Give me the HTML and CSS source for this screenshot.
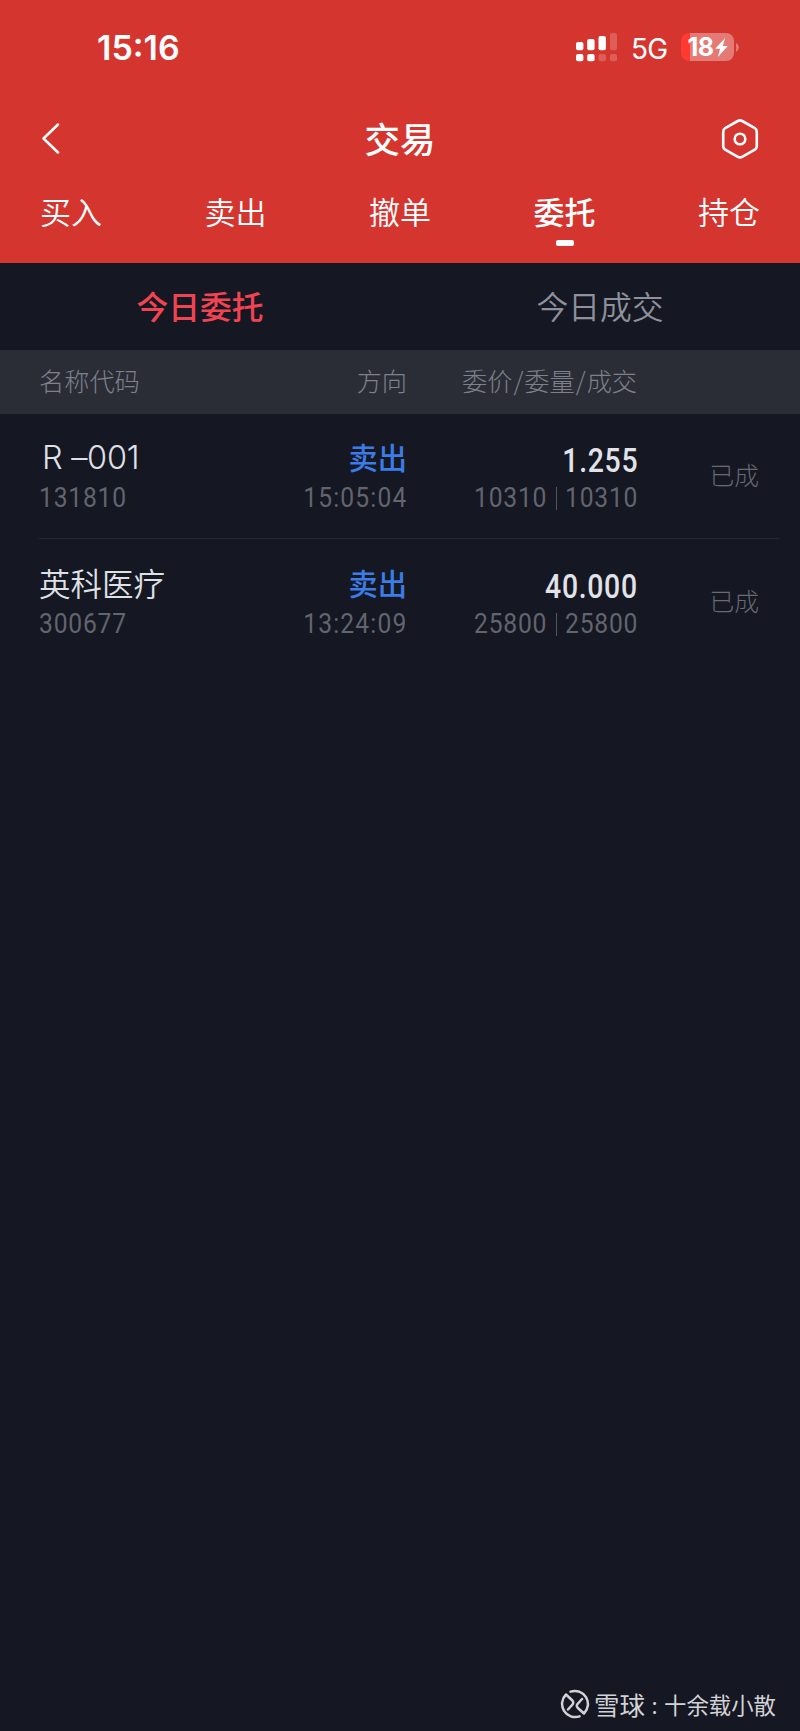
FILE: index.html
```html
<!DOCTYPE html>
<html lang="zh-CN">
<head>
<meta charset="utf-8">
<title>交易</title>
<link rel="stylesheet" href="styles.css">
</head>
<body>
<header class="top">
  <div class="status">
    <span class="clock">15:16</span>
    <div class="status-right">
      <svg class="signal" width="42" height="29" viewBox="0 0 42 29" fill="#fff">
        <rect x="0" y="9" width="7.4" height="8.3" rx="2"/>
        <rect x="11.2" y="6" width="7.4" height="11.3" rx="2"/>
        <rect x="22.5" y="3" width="7.4" height="14.3" rx="2"/>
        <rect x="34" y="0" width="7" height="17.3" rx="2" opacity=".2"/>
        <rect x="0" y="21" width="7.4" height="7.3" rx="2"/>
        <rect x="11.2" y="21" width="7.4" height="7.3" rx="2"/>
        <rect x="22.5" y="21" width="7.4" height="7.3" rx="2" opacity=".2"/>
        <rect x="34" y="21" width="7" height="7.3" rx="2" opacity=".2"/>
      </svg>
      <span class="network">5G</span>
      <div class="battery">
        <span class="battery-text">18</span>
        <svg width="13" height="19" viewBox="0 0 12 18" fill="#fff"><path d="M9.4 0 0 10.200h4.600L2.600 18 12 7.600H7.200z"/></svg>
      </div>
      <svg class="battery-cap" width="4" height="10" viewBox="0 0 4 10"><path d="M0 0a5 5 0 0 1 0 9z" fill="#e47975"/></svg>
    </div>
  </div>
  <div class="nav">
    <svg width="20" height="32" viewBox="0 0 20 32" fill="none" stroke="#fff" stroke-width="2.5" stroke-linecap="round" stroke-linejoin="round"><path d="M17 1.500 2.500 15.500 17 29.500"/></svg>
    <h1 class="title">交易</h1>
    <svg width="38" height="40" viewBox="0 0 38 40" fill="none" stroke="#fff" stroke-width="2.6" stroke-linejoin="round"><path d="M16.8 2a4.4 4.4 0 0 1 4.4 0L33.8 9.2a4.4 4.4 0 0 1 2 3.7V27a4.4 4.4 0 0 1-2 3.7L21.2 37.8a4.4 4.4 0 0 1-4.4 0L4.2 30.7a4.4 4.4 0 0 1-2-3.7V12.900a4.400 4.400 0 0 1 2-3.700z"/><circle cx="19" cy="20" r="5.300"/></svg>
  </div>
  <nav class="tabs">
    <span class="tab">买入</span>
    <span class="tab">卖出</span>
    <span class="tab">撤单</span>
    <span class="tab tab-active">委托</span>
    <span class="tab">持仓</span>
  </nav>
</header>
<div class="subtabs">
  <span class="subtab subtab-active">今日委托</span>
  <span class="subtab">今日成交</span>
</div>
<div class="table-head grid">
  <span>名称代码</span>
  <span class="right">方向</span>
  <span class="right">委价<i class="slash">/</i>委量<i class="slash">/</i>成交</span>
</div>
<main class="orders">
  <div class="order grid">
    <div class="cell">
      <span class="name name-latin">R –001</span>
      <span class="num code">131810</span>
    </div>
    <div class="cell right">
      <span class="side">卖出</span>
      <span class="num num-right time">15:05:04</span>
    </div>
    <div class="cell right">
      <span class="price num-right">1.255</span>
      <div class="volumes"><span class="num vol">10310</span><i class="bar"></i><span class="num vol">10310</span></div>
    </div>
    <span class="state">已成</span>
  </div>
  <div class="order grid">
    <div class="cell">
      <span class="name">英科医疗</span>
      <span class="num code">300677</span>
    </div>
    <div class="cell right">
      <span class="side">卖出</span>
      <span class="num num-right time">13:24:09</span>
    </div>
    <div class="cell right">
      <span class="price num-right">40.000</span>
      <div class="volumes"><span class="num vol">25800</span><i class="bar"></i><span class="num vol">25800</span></div>
    </div>
    <span class="state">已成</span>
  </div>
</main>
<footer class="watermark">
  <svg width="30" height="30" viewBox="0 0 30 30" fill="none" stroke="#d2d2d6" stroke-width="2.500" stroke-linecap="round" stroke-linejoin="round"><path d="M10.500 2.600A13.200 13.200 0 0 1 24 24.500L17.800 19Q16 17 17.500 15L22 10M19.500 27.400A13.200 13.200 0 0 1 6 5.500L12.400 11.500Q14 13.500 12.500 15.500L8 20.500"/></svg>
  <span class="brand">雪球</span>
  <span class="colon">:</span>
  <span class="author">十余载小散</span>
</footer>
</body>
</html>
```
FILE: styles.css
```css
* { box-sizing: border-box; }
body {
  margin: 0;
  height: 1731px;
  display: flex;
  flex-direction: column;
  background: #151722;
  color: #dfe0e6;
  font-family: "Noto Sans CJK SC", sans-serif;
}
.top {
  height: 263px;
  background: #d5352f;
  color: #fff;
}
.status {
  display: flex;
  justify-content: space-between;
  height: 94px;
  padding: 0 60px 0 97px;
}
.clock {
  font: 600 34px/40px Inter, sans-serif;
  padding-top: 28px;
}
.status-right {
  display: flex;
  align-items: flex-start;
  padding-top: 33px;
}
.network {
  width: 37px;
  margin: 1px 0 0 13px;
  font: 400 28px/30px Inter, sans-serif;
  letter-spacing: -.8px;
}
.battery {
  display: flex;
  align-items: center;
  justify-content: center;
  gap: 1px;
  width: 53px;
  height: 28px;
  margin-left: 13px;
  border-radius: 8px;
  background: linear-gradient(90deg, #ff3a30 9px, #e47975 9px);
}
.battery-text {
  font: 700 25px/28px Inter, sans-serif;
  letter-spacing: -.5px;
}
.battery-cap { margin: 10px 0 0 2px; }
.nav {
  display: flex;
  align-items: center;
  justify-content: space-between;
  height: 90px;
  padding: 0 41px 0 41px;
}
.title {
  margin: -3px 0 0 18px;
  font-size: 35.500px;
  font-weight: 500;
  line-height: 40px;
}
.tabs {
  display: flex;
  justify-content: space-between;
  padding: 7px 40px 0;
}
.tab {
  display: flex;
  flex-direction: column;
  align-items: center;
  font-size: 31px;
  font-weight: 350;
  line-height: 40px;
}
.tab-active { font-weight: 500; }
.tab-active::after {
  content: "";
  width: 18px;
  height: 6px;
  margin-top: 9px;
  border-radius: 2px;
  background: #fff;
}
.subtabs {
  display: grid;
  grid-template-columns: 1fr 1fr;
  height: 87px;
  text-align: center;
  font-size: 31.800px;
  font-weight: 350;
  line-height: 85px;
  color: #8e909c;
}
.subtab-active {
  font-weight: 500;
  color: #f14453;
}
.grid {
  display: grid;
  grid-template-columns: 200px 168px 230px 122px;
  padding-left: 39px;
}
.table-head {
  height: 64px;
  background: #2b2d36;
  color: #7e808b;
  font-size: 25.200px;
  font-weight: 300;
  line-height: 61px;
}
.slash {
  padding: 0 1px;
  font-style: normal;
}
.right { text-align: right; }
.order {
  position: relative;
  height: 126px;
}
.order:first-child::after {
  content: "";
  position: absolute;
  left: 39px;
  right: 21px;
  bottom: 1px;
  height: 1px;
  background: #262832;
}
.cell {
  display: flex;
  flex-direction: column;
  align-items: flex-start;
  padding-top: 22px;
}
.cell.right { align-items: flex-end; }
.name {
  font-size: 31.500px;
  font-weight: 350;
  line-height: 40px;
}
.name-latin {
  padding: 2px 0 0 3px;
  height: 40px;
  font-family: Inter, sans-serif;
  font-size: 32.500px;
  font-weight: 300;
  letter-spacing: -.3px;
}
.side {
  font-size: 29.300px;
  font-weight: 500;
  line-height: 40px;
  height: 40px;
  color: #3b7ce6;
}
.num, .price {
  font-family: Roboto, sans-serif;
  transform: scaleX(.88);
  transform-origin: left;
}
.num-right { transform-origin: right; }
.num {
  height: 42px;
  font-size: 28px;
  line-height: 44px;
  letter-spacing: .9px;
  color: #62646e;
}
.time { letter-spacing: 1.300px; }
.price {
  font-size: 33px;
  font-weight: 500;
  line-height: 49px;
  height: 40px;
  letter-spacing: .8px;
  margin-right: -1px;
  color: #e2e3e8;
  transform: scaleX(.86);
}
.volumes {
  display: flex;
  align-items: center;
}
.vol {
  width: 72px;
  letter-spacing: .9px;
}
.bar {
  width: 1px;
  height: 23px;
  margin: 2px 8px 0 10px;
  background: #53555f;
}
.state {
  padding-top: 40px;
  text-align: right;
  font-size: 24.800px;
  font-weight: 300;
  line-height: 40px;
  color: #676973;
}
.watermark {
  display: flex;
  align-items: center;
  height: 30px;
  margin: auto 24px 12px auto;
  color: #d2d2d6;
  line-height: 28px;
}
.brand {
  margin-left: 4px;
  font-size: 25.500px;
  font-weight: 400;
}
.colon {
  width: 19px;
  text-align: center;
  font-size: 22px;
}
.author {
  font-size: 22.400px;
}
```
